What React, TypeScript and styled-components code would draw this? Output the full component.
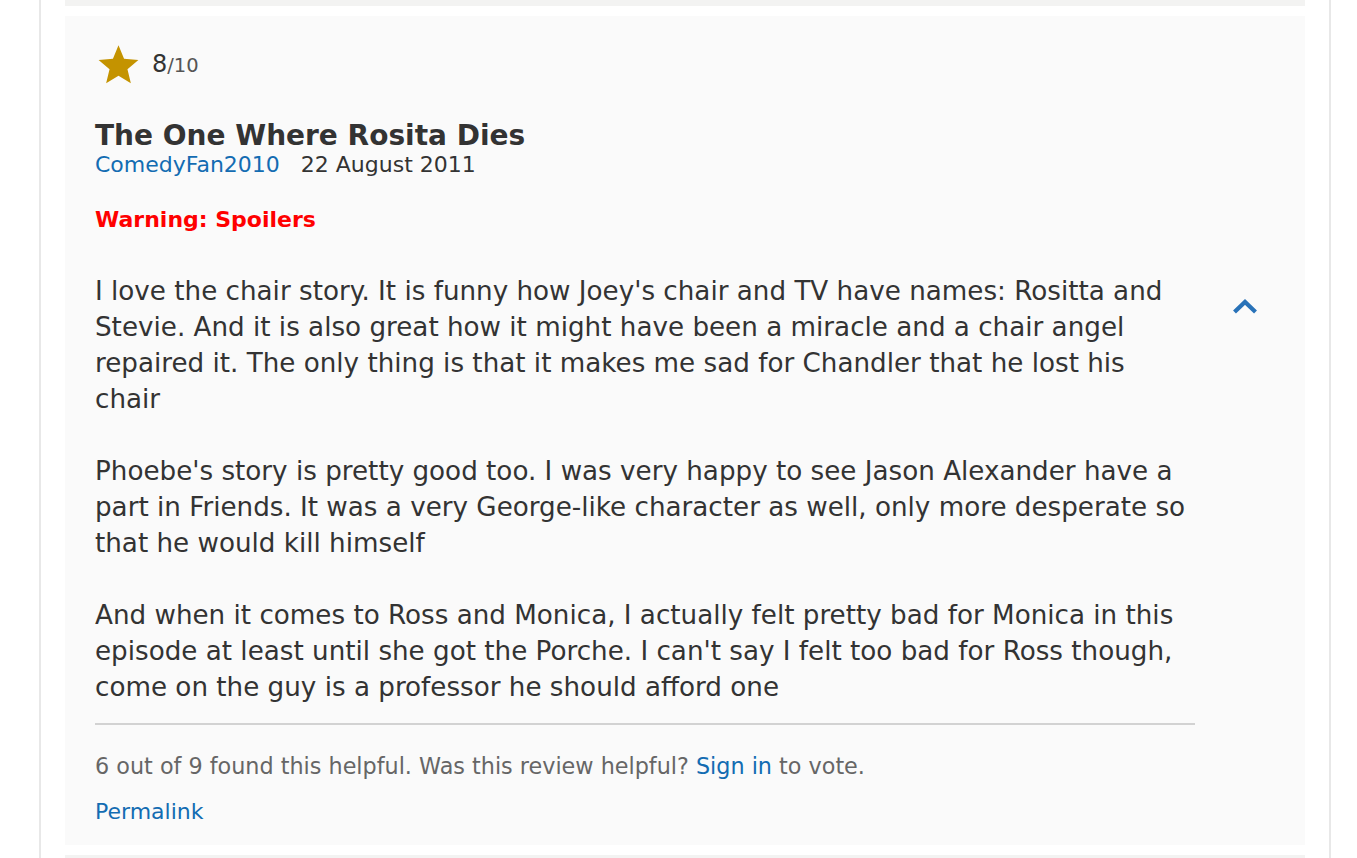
import React from "react";
import styled, { createGlobalStyle } from "styled-components";

const Global = createGlobalStyle`
  html, body { margin: 0; padding: 0; background: #fff; }
  body { font-family: "DejaVu Sans", Verdana, sans-serif; color: #333; }
  * { box-sizing: border-box; }
`;

const Page = styled.div`
  margin: 0 26px 0 39px;
  border-left: 2px solid #e8e8e8;
  border-right: 2px solid #e8e8e8;
  padding: 0 24px;
  min-height: 858px;
  display: flex;
  flex-direction: column;
  gap: 10px;
`;

const PrevCard = styled.div`
  height: 6px;
  background: #f3f3f2;
`;

const NextCard = styled.div`
  height: 20px;
  background: #f3f3f2;
`;

const Card = styled.article`
  background: #fafafa;
  padding: 28px 30px 18px 30px;
  height: 829px;
`;

const Rating = styled.div`
  display: flex;
  align-items: center;
  gap: 12px;
  height: 40px;
  padding-left: 2px;
`;

const Score = styled.span`
  font-size: 24px;
  color: #333;
`;

const OutOf = styled.span`
  font-size: 19.5px;
  color: #555;
`;

const Title = styled.h2`
  margin: 36px 0 0;
  font-size: 28px;
  line-height: 31px;
  font-weight: bold;
  color: #333;
`;

const Meta = styled.div`
  display: flex;
  gap: 21px;
  font-size: 22px;
  line-height: 28px;
`;

const Link = styled.a`
  color: #136cb2;
  text-decoration: none;
`;

const DateText = styled.span`
  color: #333;
`;

const Warning = styled.div`
  margin-top: 27px;
  font-size: 22px;
  font-weight: bold;
  color: #ff0000;
  line-height: 28px;
`;

const BodyRow = styled.div`
  display: flex;
  margin-top: 39px;
`;

const Text = styled.div`
  width: 1100px;
  flex: none;
  font-size: 26.2px;
  line-height: 36px;
  color: #333;
`;

const Toggle = styled.button`
  flex: 1;
  display: flex;
  justify-content: center;
  align-items: flex-start;
  padding: 26px 0 0 20px;
  border: none;
  background: none;
  cursor: pointer;
  height: 60px;
`;

const Divider = styled.hr`
  width: 1100px;
  margin: 18px 0 0;
  border: none;
  border-top: 2px solid #d2d2d2;
`;

const Helpful = styled.div`
  width: 1100px;
  margin-top: 26px;
  font-size: 22.3px;
  line-height: 30px;
  color: #666;
`;

const Permalink = styled.div`
  margin-top: 16px;
  font-size: 22px;
  line-height: 30px;
`;

const Star = () => (
  <svg width="43" height="44" viewBox="0 0 24 24">
    <path
      fill="#c49300"
      d="M12 1.6l3.1 7.5 8 .6-6.1 5.2 1.9 7.9L12 18.5l-6.9 4.3 1.9-7.9L.9 9.7l8-.6z"
    />
  </svg>
);

const Chevron = () => (
  <svg width="24" height="15" viewBox="0 0 24 15">
    <path d="M1.5 13 L12 3 L22.5 13" fill="none" stroke="#2872b8" strokeWidth="4.2" />
  </svg>
);

export default function App() {
  return (
    <>
      <Global />
      <Page>
        <PrevCard />
        <Card>
          <Rating>
            <Star />
            <span>
              <Score>8</Score>
              <OutOf>/10</OutOf>
            </span>
          </Rating>
          <Title>The One Where Rosita Dies</Title>
          <Meta>
            <Link href="#">ComedyFan2010</Link>
            <DateText>22 August 2011</DateText>
          </Meta>
          <Warning>Warning: Spoilers</Warning>
          <BodyRow>
            <Text>
              I love the chair story. It is funny how Joey's chair and TV have names: Rositta and
              Stevie. And it is also great how it might have been a miracle and a chair angel
              repaired it. The only thing is that it makes me sad for Chandler that he lost his
              chair
              <br />
              <br />
              Phoebe's story is pretty good too. I was very happy to see Jason Alexander have a
              part in Friends. It was a very George-like character as well, only more desperate so
              that he would kill himself
              <br />
              <br />
              And when it comes to Ross and Monica, I actually felt pretty bad for Monica in this
              episode at least until she got the Porche. I can't say I felt too bad for Ross though,
              come on the guy is a professor he should afford one
            </Text>
            <Toggle aria-label="Collapse">
              <Chevron />
            </Toggle>
          </BodyRow>
          <Divider />
          <Helpful>
            6 out of 9 found this helpful. Was this review helpful? <Link href="#">Sign in</Link> to vote.
          </Helpful>
          <Permalink>
            <Link href="#">Permalink</Link>
          </Permalink>
        </Card>
        <NextCard />
      </Page>
    </>
  );
}
